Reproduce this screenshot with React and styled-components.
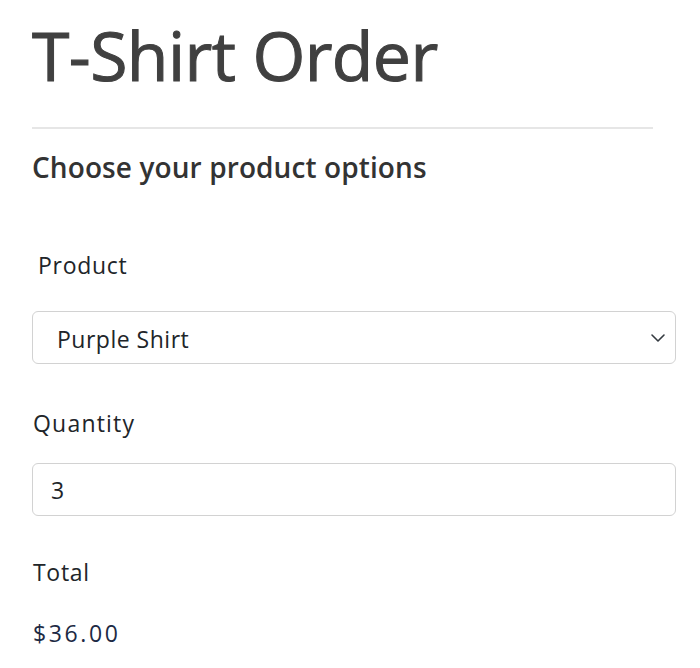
import React from "react";
import styled, { createGlobalStyle } from "styled-components";

const GlobalStyle = createGlobalStyle`
  body {
    margin: 0;
    background: #ffffff;
    font-family: "Open Sans", "Noto Sans", sans-serif;
    color: #212529;
  }
`;

const Page = styled.div`
  width: 700px;
  padding: 0 24px 0 32px;
  box-sizing: border-box;
`;

const Title = styled.h1`
  margin: 0;
  padding-top: 12px;
  font-size: 68px;
  font-weight: 400;
  line-height: 86px;
  color: #404040;
  letter-spacing: -0.6px;
  -webkit-text-stroke: 1px #404040;
`;

const Divider = styled.hr`
  width: 621px;
  margin: 29px 0 0 0;
  border: 0;
  border-top: 2px solid #e6e6e6;
`;

const Subtitle = styled.h2`
  margin: 18px 0 0 0;
  font-size: 28px;
  font-weight: 600;
  line-height: 40px;
  color: #333333;
  letter-spacing: 0.1px;
`;

const Field = styled.div`
  display: flex;
  flex-direction: column;
  margin-top: ${(p) => p.$top}px;
`;

const Label = styled.label`
  font-size: 23px;
  line-height: 32px;
  letter-spacing: ${(p) => p.$spacing || 0.7}px;
  padding-left: ${(p) => p.$indent || 1}px;
  color: #212529;
`;

const SelectWrap = styled.div`
  position: relative;
  margin-top: 30px;
`;

const Select = styled.select`
  appearance: none;
  width: 100%;
  height: 53px;
  box-sizing: border-box;
  border: 1.5px solid #d2d2d2;
  border-radius: 6px;
  background: #fff;
  padding: 2px 24px 0;
  font-family: inherit;
  font-size: 23px;
  letter-spacing: 0.5px;
  color: #212529;
`;

const Chevron = styled.svg`
  position: absolute;
  right: 10px;
  top: 19px;
  width: 16px;
  height: 16px;
  pointer-events: none;
`;

const Input = styled.input`
  margin-top: 24px;
  width: 100%;
  height: 53px;
  box-sizing: border-box;
  border: 1.5px solid #d2d2d2;
  border-radius: 6px;
  padding: 0 18px;
  font-family: inherit;
  font-size: 23px;
  color: #212529;
`;

const Amount = styled.div`
  margin-top: 29px;
  font-size: 23px;
  line-height: 32px;
  letter-spacing: 2.6px;
  padding-left: 1px;
  color: #1d2a44;
`;

export default function App() {
  return (
    <>
      <GlobalStyle />
      <Page>
        <Title>T-Shirt Order</Title>
        <Divider />
        <Subtitle>Choose your product options</Subtitle>
        <Field $top={62}>
          <Label $indent={6}>Product</Label>
          <SelectWrap>
            <Select defaultValue="purple">
              <option value="purple">Purple Shirt</option>
            </Select>
            <Chevron viewBox="0 0 16 16">
              <path d="M2 5l6 6 6-6" fill="none" stroke="#343a40" strokeWidth="1.6" strokeLinecap="round" strokeLinejoin="round" />
            </Chevron>
          </SelectWrap>
        </Field>
        <Field $top={43}>
          <Label $spacing={1.2}>Quantity</Label>
          <Input type="text" defaultValue="3" />
        </Field>
        <Field $top={40}>
          <Label>Total</Label>
          <Amount>$36.00</Amount>
        </Field>
      </Page>
    </>
  );
}
